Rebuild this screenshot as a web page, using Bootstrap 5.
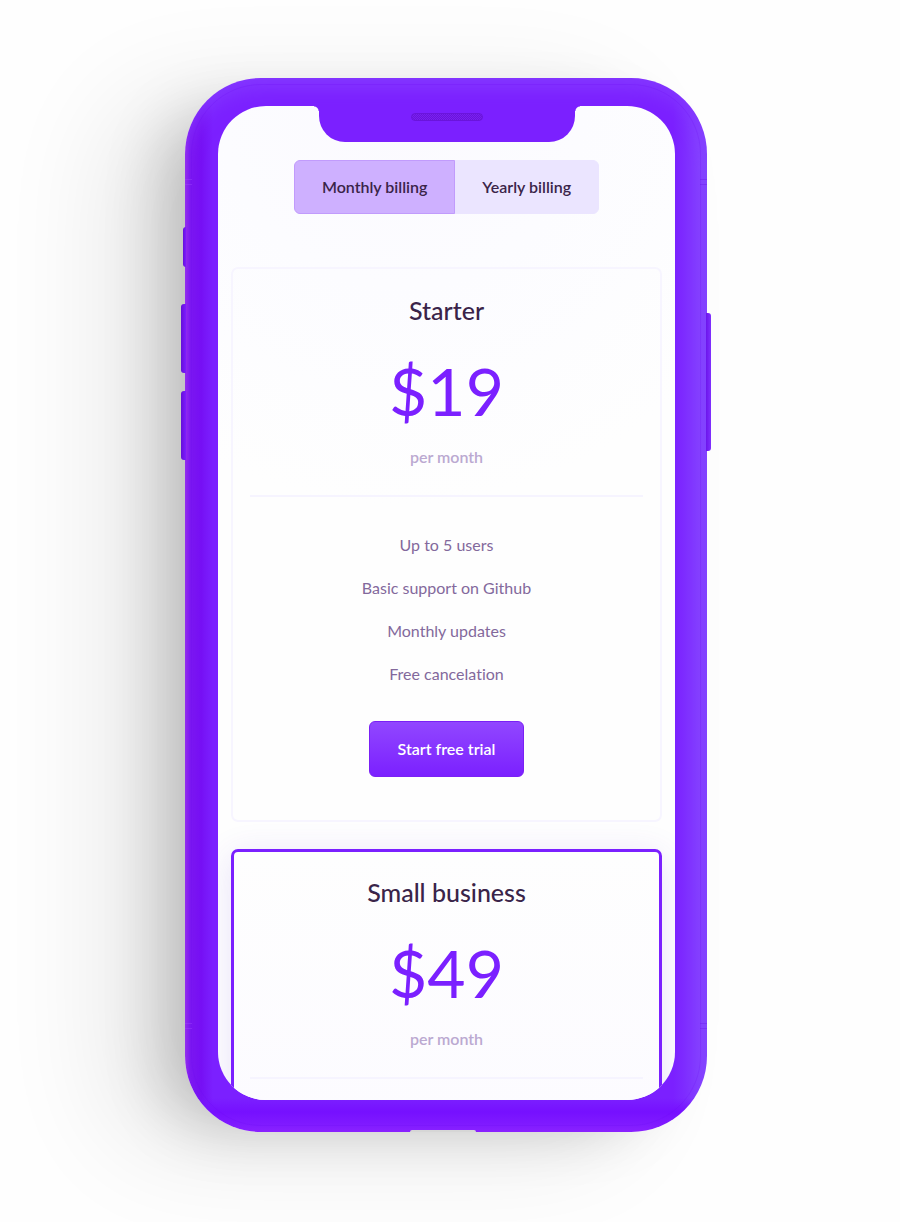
<!DOCTYPE html>
<html lang="en">
<head>
<meta charset="utf-8">
<meta name="viewport" content="width=device-width, initial-scale=1">
<title>Pricing</title>
<link href="https://cdn.jsdelivr.net/npm/bootstrap@5.3.0/dist/css/bootstrap.min.css" rel="stylesheet">
<style>
  :root { --violet: #7b20ff; --ink: #3a2449; --soft: #83699c; --faint: #bba9d1; }
  body { background: #fefefe; color: var(--ink); font-family: Lato, "Noto Sans", sans-serif; font-size: 16px; line-height: 24px; font-variant-ligatures: none; }
  .stage { padding: 78px 8px 90px 0; overflow: hidden; }

  /* phone body */
  .phone {
    width: 100%; max-width: 522px; padding: 28px 32px 32px 33px; border-radius: 76px;
    background:
      linear-gradient(0deg, #8a22ff 0, #7f1aff 8px, #7610ff 20px, rgba(123,32,255,0) 34px),
      linear-gradient(90deg, #9a2ce8 0, #7b14f0 5px, #7610f4 16px, #7b20ff 28px, #7b20ff calc(100% - 34px), #7d2aff calc(100% - 24px), #8440ff calc(100% - 8px), #8248ff 100%);
    box-shadow:
      inset 0 16px 20px -6px #8438ff,
      -40px 14px 64px -24px rgba(0,0,0,.22),
      -78px 18px 110px 0 rgba(0,0,0,.09);
  }
  .phone::before {
    content: ""; position: absolute; inset: 6px; border: 1px solid rgba(106,10,240,.2);
    border-radius: 70px; pointer-events: none;
  }
  .side-key { position: absolute; background: linear-gradient(90deg, #6410d8, #7d1cff); border-radius: 3px 0 0 3px; }
  .key-mute { left: -2px; top: 149px; width: 3px; height: 40px; }
  .key-up { left: -4px; top: 226px; width: 5px; height: 69px; }
  .key-down { left: -4px; top: 313px; width: 5px; height: 69px; }
  .key-power { right: -4px; top: 235px; width: 5px; height: 138px; border-radius: 0 3px 3px 0; background: linear-gradient(90deg, #6c14ec, #8030ff); }
  .antenna { position: absolute; width: 7px; height: 6px; border: solid rgba(160,70,255,.4); border-width: 1px 0; }
  .antenna-right { right: 0; border-color: rgba(100,10,230,.3); }
  .antenna-left { left: 0; }
  .antenna-top { top: 101px; }
  .antenna-bottom { bottom: 103px; }
  .port { position: absolute; bottom: 0; left: 50%; width: 66px; height: 2px; margin-left: -36px; background: #d6d6d6; border-radius: 4px 4px 0 0; }

  .screen {
    aspect-ratio: 457 / 994; border-radius: 48px; overflow: hidden;
    background: radial-gradient(circle at 40% 0, #fbfaff 0, #fcfcff 180px, #fefefe 400px);
  }
  .notch { width: 256px; height: 36px; padding-top: 7px; background: var(--violet); border-radius: 0 0 26px 26px; }
  .notch::before, .notch::after { content: ""; position: absolute; top: 0; width: 5px; height: 5px; }
  .notch::before { right: 100%; background: radial-gradient(circle at 0 100%, transparent 4px, var(--violet) 5px); }
  .notch::after { left: 100%; background: radial-gradient(circle at 100% 100%, transparent 4px, var(--violet) 5px); }
  .speaker { width: 72px; height: 8px; border: 1px solid #6a14dc; border-radius: 4px; background: repeating-conic-gradient(#6a14dc 0 25%, #7a20f0 0 50%) 0 0 / 2px 2px; }

  /* billing switch */
  .billing { margin-top: 18px; margin-bottom: 53px; }
  .billing .btn {
    --bs-btn-padding-x: 27px; --bs-btn-padding-y: 14px; --bs-btn-font-size: 16px; --bs-btn-line-height: 24px;
    --bs-btn-border-radius: 6px; --bs-btn-font-weight: 600;
    --bs-btn-color: var(--ink); --bs-btn-bg: #ebe5ff; --bs-btn-border-color: #ebe5ff;
    --bs-btn-active-color: var(--ink); --bs-btn-active-bg: #ceb0ff; --bs-btn-active-border-color: #c19bfc;
    height: 54px;
  }

  /* plans */
  .plans { padding: 0 13px; gap: 27px; }
  .plan { border: 2px solid #f7f5ff; border-radius: 7px; padding: 25px 17px 43px; background: transparent; text-align: center; }
  .plan-featured { border: 3px solid var(--violet); padding: 24px 16px 43px; background: linear-gradient(#fefefe, #fcfbff 260px); box-shadow: 0 6px 34px rgba(100,60,220,.14); }
  .plan h2 { font-size: 25px; line-height: 32px; font-weight: 500; margin: 0 0 25px; }
  .price { font-size: 66px; line-height: 80px; color: var(--violet); margin: 0 0 14px; }
  .period { color: var(--faint); font-weight: 600; margin: 0; }
  .plan hr { margin: 26px 0 36px; border-top: 2px solid #f6f4ff; opacity: 1; }
  .features { color: var(--soft); gap: 19px; margin: 0 0 35px; }
  .btn-trial {
    --bs-btn-padding-x: 28px; --bs-btn-padding-y: 15px; --bs-btn-font-size: 16px; --bs-btn-line-height: 24px;
    --bs-btn-border-radius: 6px; --bs-btn-font-weight: 600;
    --bs-btn-color: #fff; --bs-btn-border-color: #7a20f5; --bs-btn-hover-color: #fff;
    background: linear-gradient(#9147ff, #7b20ff);
  }
</style>
</head>
<body>
<main class="stage d-flex justify-content-center">
  <div class="phone position-relative">
    <span class="side-key key-mute"></span>
    <span class="side-key key-up"></span>
    <span class="side-key key-down"></span>
    <span class="side-key key-power"></span>
    <span class="antenna antenna-left antenna-top"></span>
    <span class="antenna antenna-right antenna-top"></span>
    <span class="antenna antenna-left antenna-bottom"></span>
    <span class="antenna antenna-right antenna-bottom"></span>
    <span class="port"></span>

    <div class="screen position-relative">
      <div class="notch position-relative mx-auto">
        <div class="speaker mx-auto"></div>
      </div>

      <div class="billing d-flex justify-content-center">
        <div class="btn-group" role="group" aria-label="Billing period">
          <input type="radio" class="btn-check" name="billing" id="monthly" checked>
          <label class="btn" for="monthly">Monthly billing</label>
          <input type="radio" class="btn-check" name="billing" id="yearly">
          <label class="btn" for="yearly">Yearly billing</label>
        </div>
      </div>

      <div class="plans d-flex flex-column">
        <section class="plan">
          <h2>Starter</h2>
          <p class="price">$19</p>
          <p class="period">per month</p>
          <hr>
          <ul class="features list-unstyled d-flex flex-column">
            <li>Up to 5 users</li>
            <li>Basic support on Github</li>
            <li>Monthly updates</li>
            <li>Free cancelation</li>
          </ul>
          <button type="button" class="btn btn-trial">Start free trial</button>
        </section>

        <section class="plan plan-featured">
          <h2>Small business</h2>
          <p class="price">$49</p>
          <p class="period">per month</p>
          <hr>
        </section>
      </div>
    </div>
  </div>
</main>
<script src="https://cdn.jsdelivr.net/npm/bootstrap@5.3.0/dist/js/bootstrap.bundle.min.js"></script>
</body>
</html>
